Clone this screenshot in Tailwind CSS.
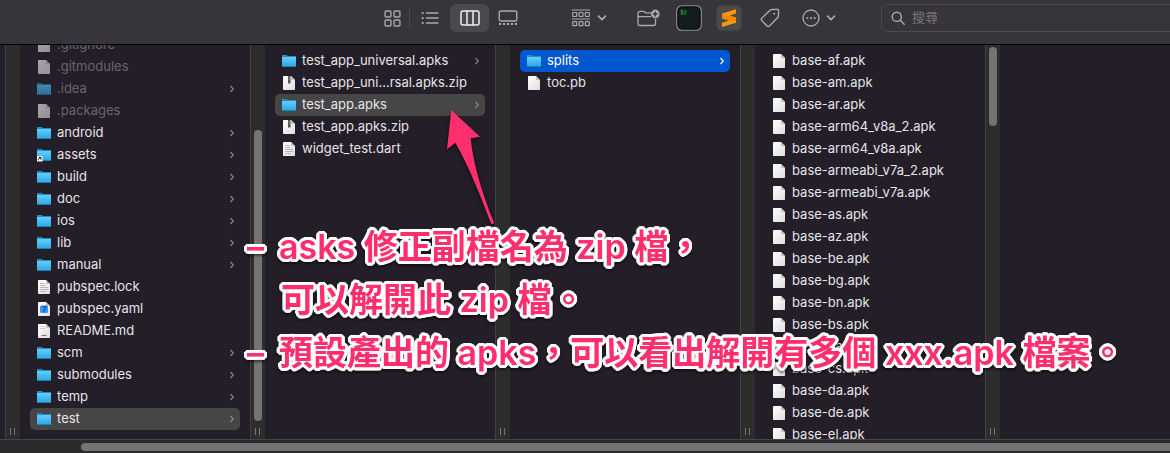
<!DOCTYPE html>
<html lang="zh-Hant">
<head>
<meta charset="utf-8">
<title>Finder</title>
<script src="https://cdn.jsdelivr.net/npm/@tailwindcss/browser@4"></script>
</head>
<body class="relative flex h-screen flex-col overflow-hidden bg-[#231e28] font-['Inter','Noto_Sans_CJK_TC',sans-serif] text-[13px] text-[#e6e4e8]">

<svg class="absolute size-0" aria-hidden="true">
  <defs>
    <linearGradient id="blue" x1="0" y1="0" x2="0" y2="1"><stop offset="0" stop-color="#66cdf9"/><stop offset="1" stop-color="#2ba7e4"/></linearGradient>
    <linearGradient id="paper" x1="0" y1="0" x2="1" y2="1"><stop offset="0" stop-color="#fff"/><stop offset="1" stop-color="#dedede"/></linearGradient>
  </defs>
  <symbol id="folder" viewBox="0 0 16 16">
    <path d="M1 3.200V1.900h4.600l1.200 1H15v2H1z" fill="#1f8fc6"/>
    <rect x="1" y="4" width="14" height="9.600" fill="url(#blue)"/>
    <path d="M1 13.100h14v.9H1z" fill="#1b83b8"/>
  </symbol>
  <symbol id="alias" viewBox="0 0 16 16">
    <use href="#folder"/>
    <rect x="1" y="9" width="5.500" height="5.500" fill="#fff"/>
    <path d="M2.400 13.300c0-1.500.5-2 1.900-2.200M3 10.500h2v2.200" fill="none" stroke="#111" stroke-width="1"/>
  </symbol>
  <symbol id="file" viewBox="0 0 16 16">
    <path d="M3 1h7l4 4v9.200a.8.8 0 0 1-.8.8H2.800a.8.8 0 0 1-.8-.8V1.800A.8.8 0 0 1 2.800 1z" fill="url(#paper)"/>
    <path d="M10 1v3.200c0 .5.3.8.8.8H14z" fill="#c2c2c2"/>
  </symbol>
  <symbol id="zip" viewBox="0 0 16 16">
    <use href="#file"/>
    <path d="M7 1h2.500v7.500H7z" fill="#555"/><path d="M7.700 2h1v1h-1zM7.700 4h1v1h-1z" fill="#999"/>
  </symbol>
  <symbol id="text" viewBox="0 0 16 16">
    <use href="#file"/>
    <path d="M4 4.500h4M4 6.500h5M4 8.500h8M4 10.500h8M4 12.500h6" stroke="#aaa" stroke-width=".8"/>
  </symbol>
  <symbol id="yaml" viewBox="0 0 16 16">
    <use href="#file"/>
    <rect x="4" y="4.500" width="8" height="7.500" rx="1.500" fill="#3b93f5"/>
    <path d="M6 6l4-.5-2.500 5.500" fill="none" stroke="#1257b8" stroke-width="1.200"/>
  </symbol>
  <symbol id="md" viewBox="0 0 16 16">
    <use href="#file"/>
    <path d="M4 3.500h4M4 5.500h5" stroke="#c8c8c8" stroke-width=".8"/><path d="M5.500 12.500h5" stroke="#777" stroke-width="1.200"/>
  </symbol>
  <symbol id="down" viewBox="0 0 10 6"><path d="M1.500 1.200 5 4.700l3.500-3.500" fill="none" stroke="currentColor" stroke-width="1.700" stroke-linecap="round" stroke-linejoin="round"/></symbol>
</svg>

<header class="flex h-[45px] shrink-0 items-start border-b border-black bg-[#38343b] pt-1 pl-[375px] text-[#aba8ae]">
  <div class="flex h-7 items-center">
    <button aria-label="圖像" class="flex h-7 w-[34px] items-center justify-center">
      <svg class="size-[17px]" viewBox="0 0 16 16" fill="none" stroke="currentColor" stroke-width="1.300"><rect x="1" y="1" width="5.600" height="5.600" rx="1.200"/><rect x="9.400" y="1" width="5.600" height="5.600" rx="1.200"/><rect x="1" y="9.400" width="5.600" height="5.600" rx="1.200"/><rect x="9.400" y="9.400" width="5.600" height="5.600" rx="1.200"/></svg>
    </button>
    <span class="h-5 w-px bg-[#4b474e]"></span>
    <button aria-label="列表" class="flex h-7 w-10 items-center justify-center">
      <svg class="h-4 w-[18px]" viewBox="0 0 18 16" fill="none" stroke="currentColor" stroke-width="1.300" stroke-linecap="round"><path d="M5.500 3h11.500M5.500 8h11.500M5.500 13h11.500"/><path d="M1.500 3h.4M1.500 8h.4M1.500 13h.4" stroke-width="1.900"/></svg>
    </button>
    <button aria-label="直欄" class="flex h-7 w-[39px] items-center justify-center rounded-md bg-[#4b484f] text-[#f0eff1]">
      <svg class="h-4 w-5" viewBox="0 0 20 16" fill="none" stroke="currentColor" stroke-width="1.500"><rect x="1" y="1" width="18" height="14" rx="2"/><path d="M7 1v14M13 1v14"/></svg>
    </button>
    <button aria-label="圖庫" class="flex h-7 w-[38px] items-center justify-center">
      <svg class="h-4 w-5" viewBox="0 0 20 16" fill="none" stroke="currentColor" stroke-width="1.400"><rect x="1.200" y="1" width="17.600" height="10" rx="1.800"/><path d="M1 14h18" stroke-width="2" stroke-dasharray="2.200 1.750"/></svg>
    </button>
  </div>
  <button aria-label="群組" class="ml-[44px] flex h-7 items-center gap-1.5">
    <svg class="h-[18px] w-5" viewBox="0 0 20 18" fill="none" stroke="currentColor" stroke-width="1.200"><path d="M1 1h18M1 10h18"/><g><rect x="1.700" y="3.500" width="4" height="4" rx=".8"/><rect x="8" y="3.500" width="4" height="4" rx=".8"/><rect x="14.300" y="3.500" width="4" height="4" rx=".8"/><rect x="1.700" y="12.700" width="4" height="4" rx=".8"/><rect x="8" y="12.700" width="4" height="4" rx=".8"/><rect x="14.300" y="12.700" width="4" height="4" rx=".8"/></g></svg>
    <svg class="h-1.5 w-2.5"><use href="#down"/></svg>
  </button>
  <button aria-label="新增檔案夾" class="ml-[29px] flex h-7 w-6 items-center">
    <svg class="h-[18px] w-6" viewBox="0 0 24 18" fill="none" stroke="currentColor" stroke-width="1.300"><path d="M15.500 3.800H9.500L8 2.300H4A2 2 0 0 0 2 4.300v10.200a2 2 0 0 0 2 2h13.500a2 2 0 0 0 2-2V10M2 7.600h13"/><circle cx="19.300" cy="5" r="4.400" fill="currentColor" stroke="none"/><path d="M19.300 2.600v4.800M16.900 5h4.800" stroke="#38343b"/></svg>
  </button>
  <button aria-label="終端機" class="ml-4 flex h-7 w-[26px] items-center">
    <svg class="size-[26px]" viewBox="0 0 26 26"><rect x=".8" y=".8" width="24.400" height="24.400" rx="5" fill="#131c1e" stroke="#8b8d8f" stroke-width="1.300"/><rect x="2" y="2" width="22" height="22" rx="4" fill="none" stroke="#070a0a"/><path d="M7.200 5.300H5v1.900h2v1.900H4.700M5.900 4.500v5.400" fill="none" stroke="#18a835" stroke-width=".8"/><path d="M8.300 5h2v5h-2z" fill="#107326"/></svg>
  </button>
  <button aria-label="Sublime Text" class="ml-3.5 flex h-7 w-[26px] items-center">
    <svg class="size-[26px]" viewBox="0 0 26 26"><rect x=".5" y=".5" width="25" height="25" rx="5" fill="#4a4a49"/><path d="M20 4.300 6 8.600v5L13 15.500 6 17.700V22l14-4.300v-5.200L13.500 10.500 20 8.500z" fill="#ff9800"/><path d="M6 9v3.600l14 4.200v-4.300z" fill="#f28600"/></svg>
  </button>
  <button aria-label="標籤" class="ml-[18px] flex h-7 w-5 items-center">
    <svg class="size-5" viewBox="0 0 20 20" fill="none" stroke="currentColor" stroke-width="1.400" stroke-linejoin="round"><path d="M11.700 1.500 17 1.300a1.500 1.500 0 0 1 1.600 1.500l-.2 5.300a2 2 0 0 1-.6 1.300L9.400 18a1.600 1.600 0 0 1-2.300 0L1.700 12.600a1.600 1.600 0 0 1 0-2.300l8.600-8.200a2 2 0 0 1 1.400-.6z"/><circle cx="14.200" cy="5.700" r="1" fill="currentColor" stroke="none"/></svg>
  </button>
  <button aria-label="更多" class="ml-[22px] flex h-7 items-center gap-1.5">
    <svg class="size-[18px]" viewBox="0 0 18 18"><circle cx="9" cy="9" r="8" fill="none" stroke="currentColor" stroke-width="1.300"/><circle cx="5.300" cy="9" r="1.100" fill="currentColor"/><circle cx="9" cy="9" r="1.100" fill="currentColor"/><circle cx="12.700" cy="9" r="1.100" fill="currentColor"/></svg>
    <svg class="h-1.5 w-2.5"><use href="#down"/></svg>
  </button>
  <label class="-mr-2 ml-[45px] flex h-7 min-w-0 flex-1 items-center gap-[7px] rounded-md border border-[#4c4850] pl-[9px]">
    <svg class="size-3.5 shrink-0" viewBox="0 0 14 14" fill="none" stroke="currentColor" stroke-width="1.400" stroke-linecap="round"><circle cx="5.800" cy="5.800" r="4.600"/><path d="m9.200 9.200 4 4"/></svg>
    <input type="search" placeholder="搜尋" aria-label="搜尋" class="min-w-0 flex-1 bg-transparent text-[13px] outline-none placeholder:text-[#78747b]">
  </label>
</header>

<main id="columns" class="flex min-h-0 flex-1"></main>

<footer class="h-3.5 shrink-0 border-t border-[#454545] bg-[#2b2a2c] pt-[3px] pl-[81px]">
  <div class="h-2 rounded-l-full bg-[#747474]"></div>
</footer>

<svg class="absolute top-[100px] left-[440px] h-[130px] w-[64px] drop-shadow-[0_2px_2px_rgba(0,0,0,0.6)]" viewBox="0 0 64 130" aria-hidden="true"><path d="M11.300 10 40 36.700l-9.300 1.500C33 64 43 96 54 122.500q-1 2.200-2.800 1.200C42 100 29 66 15.300 42.700L7 49.300z" fill="#ff2e6c"/></svg>

<div class="absolute top-[220px] left-[247px] font-['Inter','Noto_Sans_CJK_TC',sans-serif] text-[34px] leading-[53px] font-semibold whitespace-nowrap text-[#ff2e6c] drop-shadow-[0_2px_1px_rgba(0,0,0,0.5)] [text-shadow:3px_0_#fff,-3px_0_#fff,0_3px_#fff,0_-3px_#fff,2px_2px_#fff,-2px_2px_#fff,2px_-2px_#fff,-2px_-2px_#fff,3px_1px_#fff,3px_-1px_#fff,-3px_1px_#fff,-3px_-1px_#fff,1px_3px_#fff,-1px_3px_#fff,1px_-3px_#fff,-1px_-3px_#fff]">
  <p class="flex"><span class="w-8">–</span><span>asks 修正副檔名為 zip 檔，</span></p>
  <p class="pl-[34px]">可以解開此 zip 檔。</p>
  <p class="flex"><span class="w-8">–</span><span>預設產出的 apks，可以看出解開有多個 xxx.apk 檔案。</span></p>
</div>

<script>
  // Each entry: icon, name, then optional flags (f: folder arrow, d: dimmed, s: selected, a: active).
  const project = [
    ['file', '.gitignore', 'd'], ['file', '.gitmodules', 'd'], ['folder', '.idea', 'fd'], ['file', '.packages', 'd'],
    ['folder', 'android', 'f'], ['alias', 'assets', 'f'], ['folder', 'build', 'f'], ['folder', 'doc', 'f'],
    ['folder', 'ios', 'f'], ['folder', 'lib', 'f'], ['folder', 'manual', 'f'], ['text', 'pubspec.lock', ''],
    ['yaml', 'pubspec.yaml', ''], ['md', 'README.md', ''], ['folder', 'scm', 'f'], ['folder', 'submodules', 'f'],
    ['folder', 'temp', 'f'], ['folder', 'test', 'fs']
  ];
  const test = [
    ['folder', 'test_app_universal.apks', 'f'], ['zip', 'test_app_uni...rsal.apks.zip', ''],
    ['folder', 'test_app.apks', 'fs'], ['zip', 'test_app.apks.zip', ''], ['text', 'widget_test.dart', '']
  ];
  const apks = [['folder', 'splits', 'fa'], ['file', 'toc.pb', '']];
  const splits = ['af', 'am', 'ar', 'arm64_v8a_2', 'arm64_v8a', 'armeabi_v7a_2', 'armeabi_v7a', 'as', 'az', 'be', 'bg',
    'bn', 'bs', 'ca', 'cs', 'da', 'de', 'el'].map(n => ['file', 'base-' + n + '.apk', '']);

  const row = ([icon, name, flags]) => {
    const bg = flags.includes('a') ? 'bg-[#0058d0] text-white' : flags.includes('s') ? 'bg-[#464646]' : '';
    const dim = flags.includes('d');
    return `<li><button class="flex h-[22px] w-full items-center rounded-[5px] pr-[5px] pl-1.5 text-left ${bg}">
      <svg class="size-4 shrink-0 ${dim ? 'opacity-60' : ''}" aria-hidden="true"><use href="#${icon}"/></svg>
      <span class="ml-[5px] flex-1 whitespace-nowrap ${dim ? 'text-[#69656d]' : ''}">${name}</span>
      ${flags.includes('f') ? `<svg class="h-2 w-1.5 shrink-0 ${flags.includes('a') ? 'text-white' : 'text-[#8a878e]'}" viewBox="0 0 6 8" aria-hidden="true"><path d="M1.500 1 4.300 4 1.500 7" fill="none" stroke="currentColor" stroke-width="1.100"/></svg>` : ''}
    </button></li>`;
  };
  const bar = thumb => `<div class="flex w-[15px] shrink-0 flex-col items-center border-l border-[#424242] bg-[#2d2d2d] pb-1">
      <div class="flex min-h-0 flex-1 flex-col">${thumb}</div>
      <div class="mt-[7px] flex h-[7px] w-full gap-[3px] pl-1"><i class="w-px bg-[#77757a]"></i><i class="w-px bg-[#77757a]"></i></div>
    </div>`;
  const column = (items, end, thumb) => `<section class="flex w-[230px] shrink-0 flex-col overflow-hidden px-2.5 ${end ? 'justify-end pb-[9px]' : 'pt-[5px]'}">
      <ul>${items.map(row).join('')}</ul></section>${bar(thumb)}`;

  document.getElementById('columns').innerHTML =
    '<div class="w-[5px] shrink-0"></div>' + bar('') +
    column(project, true, '<div class="mt-[85px] w-2 flex-1 rounded-full bg-[#747474]"></div>') +
    column(test, false, '') + column(apks, false, '') +
    column(splits, false, '<div class="mt-0.5 h-[79px] w-2 rounded-full bg-[#747474]"></div>') +
    '<div class="flex-1"></div>';
</script>
</body>
</html>
